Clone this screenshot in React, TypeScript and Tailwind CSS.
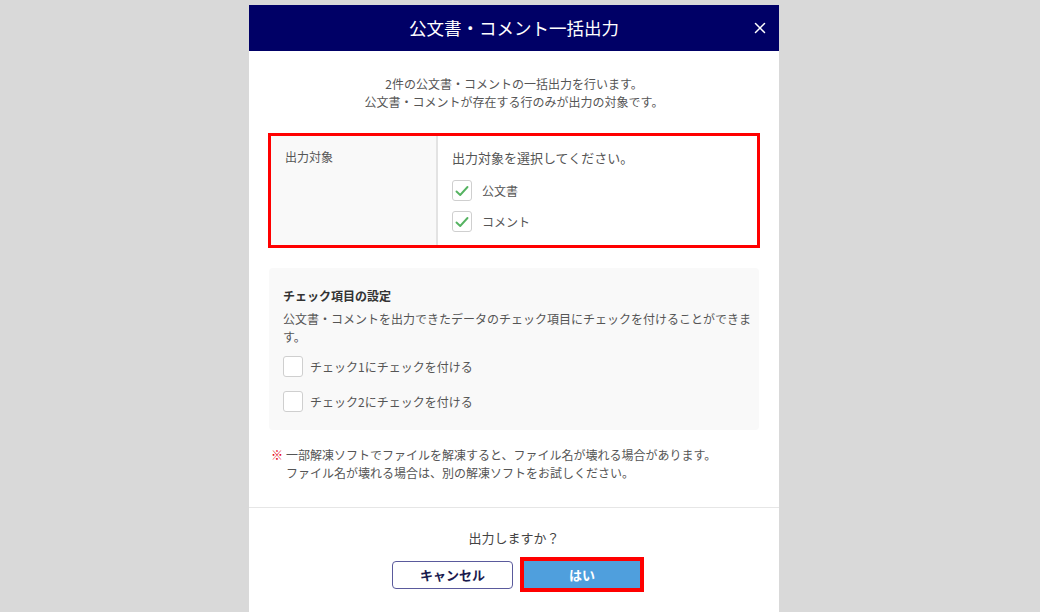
import React, { useState } from 'react';

const FONT = { fontFamily: '"Noto Sans CJK JP", "Noto Sans", sans-serif' };

function CheckBox({ checked }: { checked: boolean }) {
  return (
    <span className="flex h-[21px] w-[20px] shrink-0 items-center justify-center rounded-[3px] border border-[#cfcfcf] bg-white">
      {checked && (
        <svg width="16" height="16" viewBox="0 0 16 16" fill="none">
          <path d="M2.5 8.5 L6.2 12 L13.5 4" stroke="#55b361" strokeWidth="1.9" strokeLinecap="round" strokeLinejoin="round" />
        </svg>
      )}
    </span>
  );
}

export default function App() {
  const [targets, setTargets] = useState({ doc: true, comment: true });
  const [checks, setChecks] = useState({ c1: false, c2: false });

  return (
    <div className="h-[612px] overflow-hidden bg-[#d9d9d9] pt-[5px]" style={FONT}>
      <div className="ml-[249px] h-[620px] w-[530px] bg-white">
        {/* Header */}
        <div className="relative flex h-[46px] items-center justify-center bg-[#000066]">
          <h1 className="text-[17.5px] text-white">公文書・コメント一括出力</h1>
          <button className="absolute right-[13px] top-[17px] text-white">
            <svg width="12" height="12" viewBox="0 0 12 12">
              <path d="M1.5 1.5 L10.5 10.5 M10.5 1.5 L1.5 10.5" stroke="white" strokeWidth="1.5" strokeLinecap="round" />
            </svg>
          </button>
        </div>

        {/* Body */}
        <div className="px-[19px] pb-[25px] pt-[24px]">
          <div className="text-center text-[12px] leading-[18px] text-[#555]">
            <p>2件の公文書・コメントの一括出力を行います。</p>
            <p>公文書・コメントが存在する行のみが出力の対象です。</p>
          </div>

          {/* Output targets */}
          <div className="mt-[22px] flex border-[3px] border-[#ff0000]">
            <div className="w-[167px] border-r-2 border-[#e3e3e3] bg-[#f9f9f9] pl-[14px] pt-[12px] text-[12px] leading-[18px] text-[#555]">
              出力対象
            </div>
            <div className="flex-1 px-[14px] py-[13px] text-[#555]">
              <p className="text-[13px] leading-[18px]">出力対象を選択してください。</p>
              <div className="mt-[13px] flex flex-col gap-[10px]">
                <label className="flex items-center gap-[10px] text-[12px]" onClick={() => setTargets({ ...targets, doc: !targets.doc })}>
                  <CheckBox checked={targets.doc} />
                  公文書
                </label>
                <label className="flex items-center gap-[10px] text-[12px]" onClick={() => setTargets({ ...targets, comment: !targets.comment })}>
                  <CheckBox checked={targets.comment} />
                  コメント
                </label>
              </div>
            </div>
          </div>

          {/* Check settings */}
          <div className="mx-px mt-[20px] rounded-[4px] bg-[#f9f9f9] pb-[18px] pl-[14px] pr-[2px] pt-[19px]">
            <h2 className="text-[12px] font-bold leading-[18px] text-[#333]">チェック項目の設定</h2>
            <p className="mt-[5px] text-[12px] leading-[18px] text-[#555]">
              公文書・コメントを出力できたデータのチェック項目にチェックを付けることができます。
            </p>
            <div className="mt-[10px] flex flex-col gap-[14px]">
              <label className="flex items-center gap-[7px] text-[12px] text-[#555]" onClick={() => setChecks({ ...checks, c1: !checks.c1 })}>
                <CheckBox checked={checks.c1} />
                チェック1にチェックを付ける
              </label>
              <label className="flex items-center gap-[7px] text-[12px] text-[#555]" onClick={() => setChecks({ ...checks, c2: !checks.c2 })}>
                <CheckBox checked={checks.c2} />
                チェック2にチェックを付ける
              </label>
            </div>
          </div>

          {/* Note */}
          <div className="mt-[16px] flex pl-[3px] text-[12px] leading-[18px] text-[#555]">
            <span className="w-[15px] shrink-0 text-[#e60012]">※</span>
            <div>
              <p>一部解凍ソフトでファイルを解凍すると、ファイル名が壊れる場合があります。</p>
              <p>ファイル名が壊れる場合は、別の解凍ソフトをお試しください。</p>
            </div>
          </div>
        </div>

        {/* Footer */}
        <div className="border-t border-[#e6e6e6] pt-[21px]">
          <p className="text-center text-[13px] leading-[18px] text-[#444]">出力しますか？</p>
          <div className="mt-[10px] flex items-center justify-center gap-[7px] pl-[8px]">
            <button className="h-[28px] w-[121px] rounded-[4px] border-[1.5px] border-[#5a5a9c] bg-white text-[13px] font-bold text-[#1a1a4e]">
              キャンセル
            </button>
            <div className="border-4 border-[#ff0000]">
              <button className="block h-[27px] w-[116px] bg-[#4f9fdd] text-[13px] font-bold text-white">はい</button>
            </div>
          </div>
        </div>
      </div>
    </div>
  );
}
